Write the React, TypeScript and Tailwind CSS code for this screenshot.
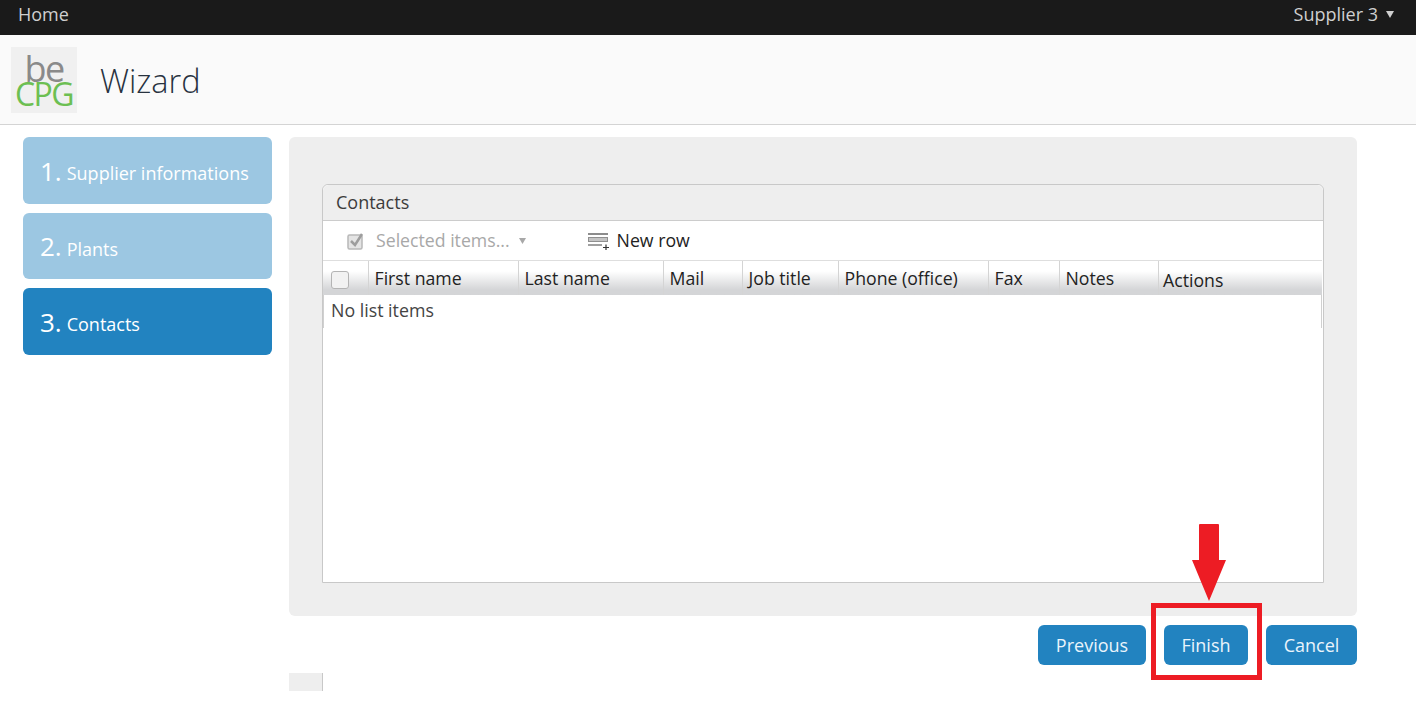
import React from "react";

const font = { fontFamily: '"Open Sans", sans-serif' };

function Step({ n, label, active, h }: { n: string; label: string; active?: boolean; h: string }) {
  return (
    <div className={`${h} rounded-[6px] flex items-center pl-[17px] text-white ${active ? "bg-[#2283c0]" : "bg-[#9cc7e2]"}`}>
      <span className="text-[26px] leading-none mr-[5px]">{n}</span>
      <span className="text-[18px] leading-none mt-[5px]">{label}</span>
    </div>
  );
}

const cols: [string, string][] = [
  ["First name", "w-[150px]"],
  ["Last name", "w-[145px]"],
  ["Mail", "w-[79px]"],
  ["Job title", "w-[96px]"],
  ["Phone (office)", "w-[150px]"],
  ["Fax", "w-[71px]"],
  ["Notes", "w-[99px]"],
];

function Btn({ label, w }: { label: string; w: string }) {
  return (
    <div className={`${w} h-[40px] rounded-[6px] bg-[#2283c0] text-[#eaf4fb] text-[18px] flex items-center justify-center`}>{label}</div>
  );
}

export default function App() {
  return (
    <div style={font} className="relative w-[1416px] h-[702px] bg-white overflow-hidden">
      <div className="h-[35px] bg-[#1a1a1a] flex items-center justify-between pl-[18px] pr-[22px] pb-[6px] text-[18px] text-[#cfcfcf]">
        <span>Home</span>
        <span className="flex items-center gap-[8px]">
          Supplier 3
          <svg width="8" height="7" viewBox="0 0 8 7"><path d="M0 0h8L4 7z" fill="#cfcfcf" /></svg>
        </span>
      </div>
      <div className="h-[90px] bg-[#fafafa] border-b border-[#d4d4d4] flex items-center pl-[11px] pt-[1px]">
        <div className="w-[66px] h-[66px] bg-[#f0f0f0] flex flex-col items-center">
          <span className="text-[#8a8a8a] text-[36px] leading-[24px] mt-[10px] tracking-[-1.5px]">be</span>
          <span className="text-[#6cbf52] text-[32px] leading-[24px] mt-[1px] tracking-[-1.500px]">CPG</span>
        </div>
        <span className="ml-[23px] text-[32.500px] font-light text-[#28323f] leading-none mt-[2px]">Wizard</span>
      </div>
      <div className="flex pl-[23px] pt-[12px]">
        <div className="w-[249px] flex flex-col gap-[9px]">
          <Step n="1." label="Supplier informations" h="h-[67px]" />
          <Step n="2." label="Plants" h="h-[66px]" />
          <Step n="3." label="Contacts" active h="h-[67px]" />
        </div>
        <div className="ml-[17px] w-[1068px]">
          <div className="h-[479px] rounded-[6px] bg-[#eeeeee] pl-[33px] pr-[33px] pt-[47px]">
            <div className="h-[399px] w-[1002px] bg-white border border-[#c8c8c8] rounded-t-[6px] flex flex-col">
              <div className="h-[36px] shrink-0 bg-[#eeeeee] border-b border-[#cccccc] rounded-t-[6px] pl-[13px] flex items-center text-[18px] text-[#3c3c3c]">Contacts</div>
              <div className="h-[39px] shrink-0 flex items-center text-[17.700px]">
                <svg className="ml-[24px]" width="18" height="18" viewBox="0 0 18 18">
                  <rect x="1" y="3" width="14" height="14" rx="1.5" fill="#e4e4e4" stroke="#b8b8b8" strokeWidth="1.5" />
                  <path d="M4 9l4 4 7-11" fill="none" stroke="#9d9d9d" strokeWidth="2.5" />
                </svg>
                <span className="ml-[11px] text-[#a8a8a8]">Selected items...</span>
                <svg className="ml-[9px]" width="7" height="6" viewBox="0 0 7 6"><path d="M0 0h7L3.500 6z" fill="#a8a8a8" /></svg>
                <svg className="ml-[62px]" width="22" height="18" viewBox="0 0 22 18">
                  <rect x="0" y="1" width="20" height="2" fill="#8c8c8c" />
                  <rect x="0.500" y="5.500" width="19" height="4" fill="#c4c4c4" stroke="#8f8f8f" />
                  <rect x="0" y="12" width="14" height="2" fill="#a0a0a0" />
                  <path d="M15 15.500h6M18 12.500v6" stroke="#333" strokeWidth="1.200" />
                </svg>
                <span className="ml-[7px] text-[#222222]">New row</span>
              </div>
              <div className="h-[35px] shrink-0 flex text-[17.700px] text-[#222222] border-t border-[#dedede] bg-gradient-to-b from-white from-30% to-[#d4d5d7] to-85% mr-[1px]">
                <div className="w-[46px] border-r border-[#d4d4d4] flex items-center pl-[8px]">
                  <div className="w-[18px] h-[18px] rounded-[3px] border border-[#b4b4b4] bg-[#f2f2f2] mt-[4px]" />
                </div>
                {cols.map(([t, w]) => (
                  <div key={t} className={`${w} shrink-0 border-r border-[#d4d4d4] pl-[5.500px] flex items-center whitespace-nowrap`}>{t}</div>
                ))}
                <div className="flex-1 pl-[4px] pt-[4px] flex items-center">Actions</div>
              </div>
              <div className="h-[33px] shrink-0 pl-[7px] pb-[2px] flex items-center text-[17.800px] text-[#444444] border-l border-r border-[#d0d0d0] mr-[1px]">No list items</div>
            </div>
          </div>
          <div className="flex justify-end gap-[18px] mt-[9px]">
            <Btn label="Previous" w="w-[108px]" />
            <Btn label="Finish" w="w-[84px]" />
            <Btn label="Cancel" w="w-[91px]" />
          </div>
          <div className="mt-[8px] w-[34px] h-[18px] bg-[#eeeeee] border-r border-[#c8c8c8]" />
        </div>
      </div>
      <div className="absolute left-[1151px] top-[603px] w-[111px] h-[77px] border-[5px] border-[#ed1c24]" />
      <svg className="absolute left-[1190px] top-[523px]" width="38" height="80" viewBox="0 0 38 80">
        <path d="M9 2q0-1 1-1h18q1 0 1 1v35h7L19 78 2 37h7z" fill="#ed1c24" />
      </svg>
    </div>
  );
}
